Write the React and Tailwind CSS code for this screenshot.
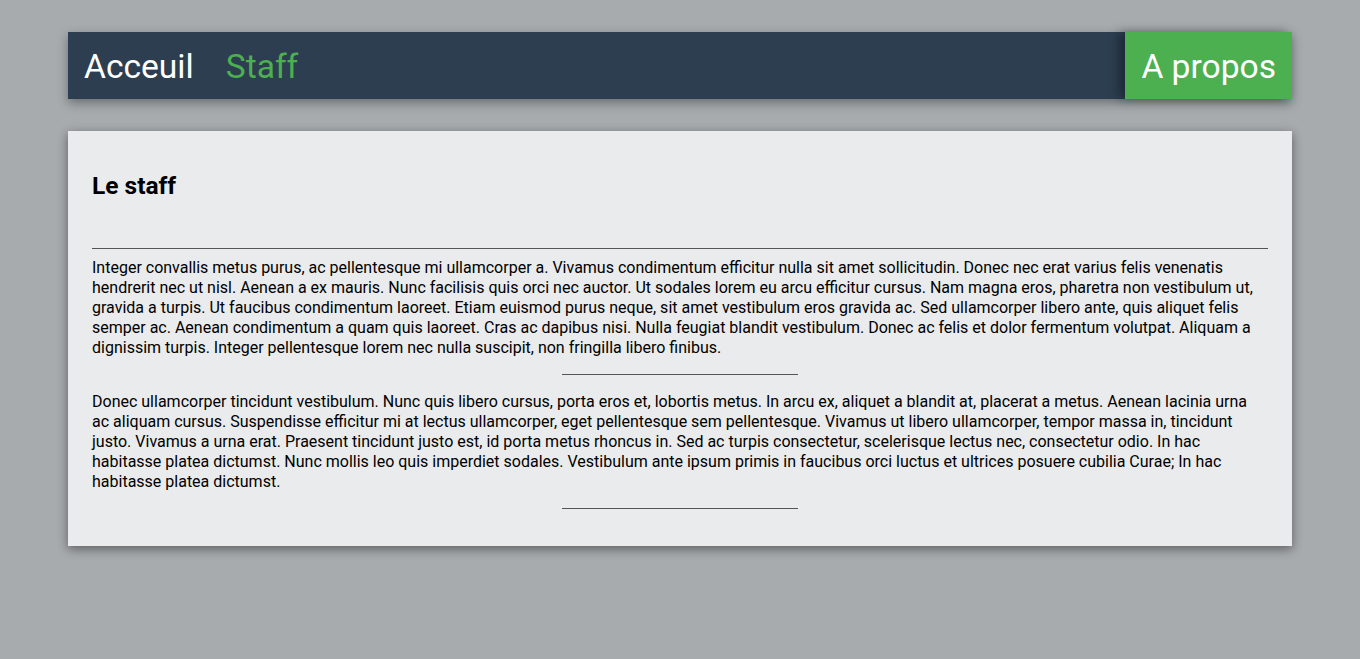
const paragraphs = [
  "Integer convallis metus purus, ac pellentesque mi ullamcorper a. Vivamus condimentum efficitur nulla sit amet sollicitudin. Donec nec erat varius felis venenatis hendrerit nec ut nisl. Aenean a ex mauris. Nunc facilisis quis orci nec auctor. Ut sodales lorem eu arcu efficitur cursus. Nam magna eros, pharetra non vestibulum ut, gravida a turpis. Ut faucibus condimentum laoreet. Etiam euismod purus neque, sit amet vestibulum eros gravida ac. Sed ullamcorper libero ante, quis aliquet felis semper ac. Aenean condimentum a quam quis laoreet. Cras ac dapibus nisi. Nulla feugiat blandit vestibulum. Donec ac felis et dolor fermentum volutpat. Aliquam a dignissim turpis. Integer pellentesque lorem nec nulla suscipit, non fringilla libero finibus.",
  "Donec ullamcorper tincidunt vestibulum. Nunc quis libero cursus, porta eros et, lobortis metus. In arcu ex, aliquet a blandit at, placerat a metus. Aenean lacinia urna ac aliquam cursus. Suspendisse efficitur mi at lectus ullamcorper, eget pellentesque sem pellentesque. Vivamus ut libero ullamcorper, tempor massa in, tincidunt justo. Vivamus a urna erat. Praesent tincidunt justo est, id porta metus rhoncus in. Sed ac turpis consectetur, scelerisque lectus nec, consectetur odio. In hac habitasse platea dictumst. Nunc mollis leo quis imperdiet sodales. Vestibulum ante ipsum primis in faucibus orci luctus et ultrices posuere cubilia Curae; In hac habitasse platea dictumst.",
];

const Nav = () => (
  <nav className="flex h-[67px] bg-[#2c3e50] shadow-[0_4px_10px_rgba(0,0,0,0.35)]">
    <a className="flex items-center px-4 pt-[3px] text-[33.6px] text-white">Acceuil</a>
    <a className="flex items-center px-4 pt-[3px] text-[33.6px] text-[#4caf50]">Staff</a>
    <a className="ml-auto flex items-center px-4 pt-[3px] text-[33.6px] text-white bg-[#4caf50] shadow-[-6px_0_10px_rgba(0,0,0,0.35)]">A propos</a>
  </nav>
);

export default function App() {
  return (
    <div className="min-h-[659px] bg-[#a7abae] pt-8 font-['Roboto',sans-serif]">
      <div className="mx-auto w-[90%]">
        <Nav />
        <main className="mt-8 bg-[#eaebec] px-6 pt-[41px] pb-[37px] shadow-[0_3px_10px_rgba(0,0,0,0.45)]">
          <h2 className="text-[24.5px] font-bold leading-[28px] text-black">Le staff</h2>
          <hr className="mt-[48px] border-t border-[#555]" />
          {paragraphs.map((p, i) => (
            <section key={i}>
              <p className={`${i === 0 ? 'mt-[9px]' : 'mt-[17px]'} text-[16px] leading-[20px] text-black`}>{p}</p>
              <hr className="mx-auto mt-4 w-[20%] border-t border-[#555]" />
            </section>
          ))}
        </main>
      </div>
    </div>
  );
}
